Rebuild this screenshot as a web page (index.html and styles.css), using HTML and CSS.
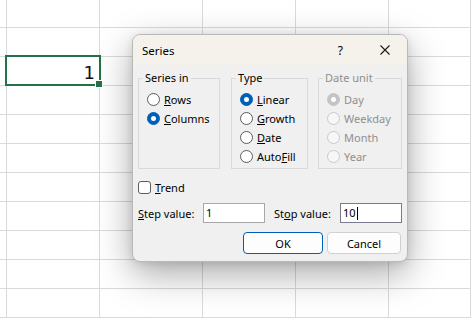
FILE: index.html
```html
<!DOCTYPE html>
<html lang="en">
<head>
  <meta charset="UTF-8">
  <title>Series</title>
  <link rel="stylesheet" href="styles.css">
</head>
<body>
  <div class="sheet" id="sheet"></div>

  <div class="dialog">
    <div class="titlebar">
      <span class="title">Series</span>
      <span class="help">?</span>
      <svg class="close" width="10" height="10" viewBox="0 0 10 10">
        <path d="M0.5 0.5L9.5 9.5M9.5 0.5L0.5 9.5" stroke="#1a1a1a" stroke-width="1.1" fill="none"/>
      </svg>
    </div>
    <div class="body">
      <div class="groups">
        <fieldset class="group series-in">
          <legend>Series in</legend>
          <div class="option"><span class="radio"></span><span><u>R</u>ows</span></div>
          <div class="option"><span class="radio on"></span><span><u>C</u>olumns</span></div>
        </fieldset>
        <fieldset class="group type">
          <legend>Type</legend>
          <div class="option"><span class="radio on"></span><span><u>L</u>inear</span></div>
          <div class="option"><span class="radio"></span><span><u>G</u>rowth</span></div>
          <div class="option"><span class="radio"></span><span><u>D</u>ate</span></div>
          <div class="option"><span class="radio"></span><span>Auto<u>F</u>ill</span></div>
        </fieldset>
        <fieldset class="group date-unit disabled">
          <legend>Date unit</legend>
          <div class="option"><span class="radio on"></span><span>Day</span></div>
          <div class="option"><span class="radio"></span><span>Weekday</span></div>
          <div class="option"><span class="radio"></span><span>Month</span></div>
          <div class="option"><span class="radio"></span><span>Year</span></div>
        </fieldset>
      </div>

      <div class="option trend"><span class="check"></span><span><u>T</u>rend</span></div>

      <div class="fields">
        <span class="label step-label"><u>S</u>tep value:</span>
        <div class="textbox">1</div>
        <span class="label stop-label">St<u>o</u>p value:</span>
        <div class="textbox focused">10<span class="caret"></span></div>
      </div>

      <div class="buttons">
        <button class="btn default">OK</button>
        <button class="btn cancel">Cancel</button>
      </div>
    </div>
  </div>

  <script>
    const sheet = document.getElementById('sheet');
    const cols = 6, rows = 12;
    for (let r = 0; r < rows; r++) {
      for (let c = 0; c < cols; c++) {
        const cell = document.createElement('div');
        cell.className = 'cell';
        if (r === 2 && c === 1) {
          cell.classList.add('active');
          cell.textContent = '1';
          const handle = document.createElement('span');
          handle.className = 'handle';
          cell.appendChild(handle);
        }
        sheet.appendChild(cell);
      }
    }
  </script>
</body>
</html>
```

FILE: styles.css
```css
body {
  margin: 0;
  width: 471px;
  height: 318px;
  overflow: hidden;
  background: #ffffff;
  position: relative;
  font-family: "Segoe UI", "Noto Sans", sans-serif;
}

/* worksheet */
.sheet {
  display: grid;
  grid-template-columns: 7px 93px 103px 93px 93px 1fr;
  grid-template-rows: 28px repeat(10, 29px) 1fr;
  height: 318px;
}
.cell {
  box-sizing: border-box;
  border-right: 1px solid #dadada;
  border-bottom: 1px solid #dadada;
}
.cell.active {
  position: relative;
  display: flex;
  align-items: flex-end;
  justify-content: flex-end;
  padding: 0 4px 2px 0;
  font-family: "DejaVu Sans", sans-serif;
  font-size: 18px;
  line-height: 21px;
  color: #111;
}
.cell.active::after {
  content: "";
  position: absolute;
  left: -2px;
  top: -2px;
  right: -2px;
  bottom: -1px;
  border: 2px solid #217346;
}
.handle {
  position: absolute;
  right: -4px;
  bottom: -3px;
  width: 6px;
  height: 6px;
  background: #217346;
  border: 1px solid #fff;
  z-index: 1;
}

/* dialog */
.dialog {
  position: absolute;
  left: 132px;
  top: 34px;
  width: 276px;
  height: 228px;
  box-sizing: border-box;
  border: 1px solid #b9b9b9;
  border-radius: 8px;
  overflow: hidden;
  background: #f0f0f0;
  box-shadow: 0 12px 36px rgba(0, 0, 0, 0.34), 0 2px 8px rgba(0, 0, 0, 0.1);
  font-size: 11px;
  color: #000;
}
.titlebar {
  height: 30px;
  background: #f4f2eb;
  display: flex;
  align-items: center;
  padding: 0 17px 0 9px;
}
.title {
  flex: 1;
  font-size: 11.5px;
}
.help {
  font-size: 12px;
  margin-right: 37px;
}
.close {
  display: block;
}
.body {
  padding: 0 5px;
}
.groups {
  display: flex;
  margin-top: 6px;
}
.group {
  margin: 0;
  padding: 5px 0 2px 8px;
  border: 1px solid #d9d9d9;
  box-sizing: border-box;
}
.group legend {
  padding: 0 2px;
  margin-left: -4px;
  line-height: 14px;
}
.series-in { width: 82px; }
.type { width: 77px; margin-left: 11px; }
.date-unit { width: 84px; margin-left: 10px; }
.disabled { color: #8f8f8f; }

.option {
  display: flex;
  align-items: center;
  gap: 4px;
  height: 19px;
}
.radio {
  width: 13px;
  height: 13px;
  box-sizing: border-box;
  border: 1px solid #5c5c5c;
  border-radius: 50%;
  background: #fff;
  position: relative;
}
.radio.on {
  background: #005fb8;
  border-color: #005fb8;
}
.radio.on::after {
  content: "";
  position: absolute;
  left: 3px;
  top: 3px;
  width: 5px;
  height: 5px;
  border-radius: 50%;
  background: #fff;
}
.disabled .radio {
  border-color: #c9c9c9;
  background: #f7f7f7;
}
.disabled .radio.on {
  background: #c4c4c4;
  border-color: #c4c4c4;
}

.trend {
  margin-top: 9px;
}
.check {
  width: 13px;
  height: 13px;
  box-sizing: border-box;
  border: 1px solid #5c5c5c;
  border-radius: 3px;
  background: #fff;
}

.fields {
  display: flex;
  align-items: center;
  margin-top: 6px;
  height: 20px;
}
.step-label { width: 65px; }
.stop-label { width: 66px; margin-left: 9px; }
.textbox {
  width: 62px;
  height: 20px;
  box-sizing: border-box;
  border: 1px solid #a8a8a8;
  background: #fff;
  padding-left: 2px;
  line-height: 18px;
  display: flex;
  align-items: center;
}
.textbox.focused {
  border-color: #7a7a8c;
}
.caret {
  width: 1px;
  height: 13px;
  background: #000;
  margin-left: 1px;
}

.buttons {
  display: flex;
  justify-content: flex-end;
  gap: 4px;
  margin-top: 9px;
  margin-right: 1px;
}
.btn {
  height: 22px;
  box-sizing: border-box;
  font-family: inherit;
  font-size: 11px;
  color: #000;
  background: #fdfdfd;
  border: 1px solid #d0d0d0;
  border-radius: 4px;
  padding: 0;
}
.btn.default {
  width: 80px;
  border-color: #005fb8;
}
.btn.cancel {
  width: 74px;
}
```
